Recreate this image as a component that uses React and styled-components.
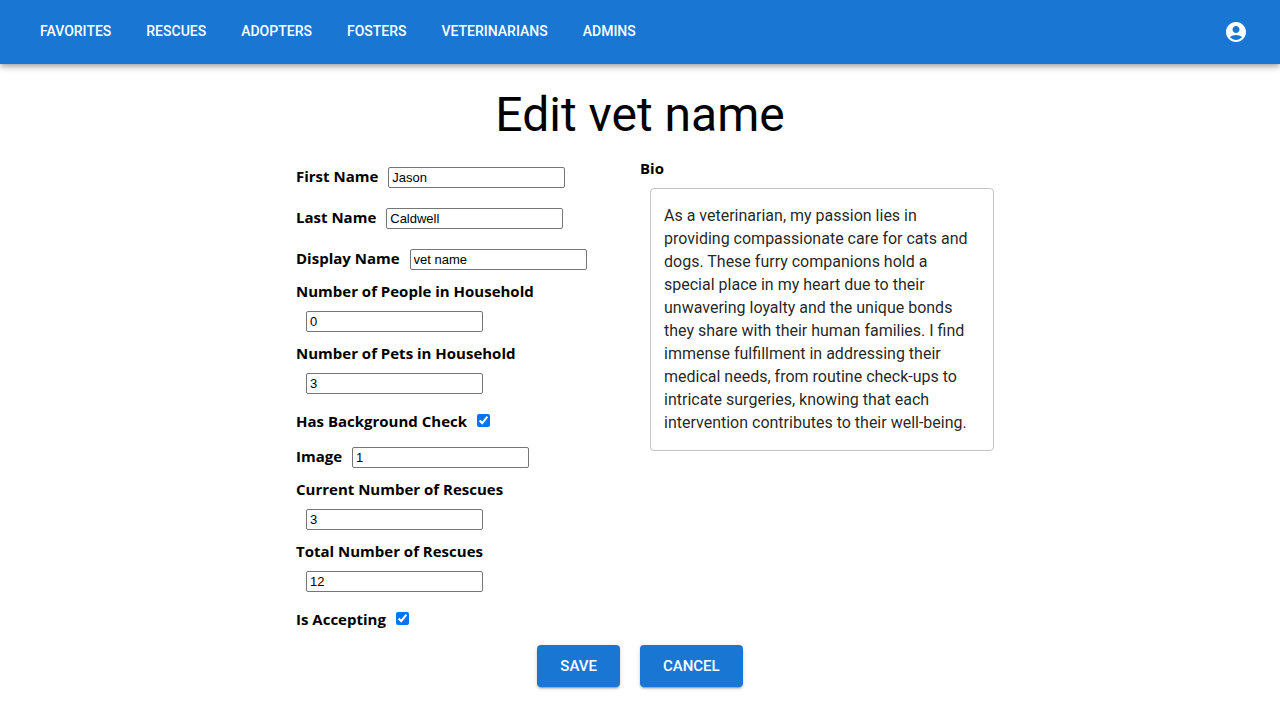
import React, { useState } from "react";
import styled, { createGlobalStyle } from "styled-components";

const GlobalStyle = createGlobalStyle`
  *, *::before, *::after { box-sizing: border-box; }
  body {
    margin: 0;
    background: #fff;
    color: #000;
    font-family: Roboto, "Liberation Sans", sans-serif;
  }
`;

const AppBar = styled.header`
  display: flex;
  align-items: center;
  justify-content: space-between;
  min-height: 64px;
  padding: 0 24px;
  background: #1976d2;
  color: #fff;
  box-shadow: 0 2px 4px -1px rgba(0, 0, 0, 0.2), 0 4px 5px 0 rgba(0, 0, 0, 0.14),
    0 1px 10px 0 rgba(0, 0, 0, 0.12);
`;

const Nav = styled.nav`
  display: flex;
  flex-wrap: wrap;
  column-gap: 3px;
`;

const NavLink = styled.a`
  padding: 6px 16px 8px;
  color: inherit;
  font-size: 14px;
  font-weight: 500;
  line-height: 24px;
  text-decoration: none;
  text-transform: uppercase;
`;

const AccountButton = styled.button`
  display: flex;
  padding: 8px 0;
  margin: 0 8px;
  border: 0;
  background: none;
  color: inherit;
  cursor: pointer;
`;

const AccountIcon = styled.svg`
  width: 24px;
  height: 24px;
  fill: currentColor;
`;

const Page = styled.main`
  padding: 23px 24px;
`;

const Title = styled.h1`
  margin: 0 0 14px;
  font-size: 48px;
  font-weight: 400;
  line-height: 56px;
  text-align: center;
`;

const Form = styled.form`
  max-width: 688px;
  margin: 0 auto;
`;

const Columns = styled.div`
  display: grid;
  grid-template-columns: 1fr 1fr;
`;

const Row = styled.div`
  display: flex;
  flex-direction: ${(p) => (p.$stacked ? "column" : "row")};
  align-items: ${(p) => (p.$stacked ? "flex-start" : "baseline")};
`;

const Label = styled.label`
  padding-top: 2px;
  font-family: "Open Sans", "Noto Sans", sans-serif;
  font-size: 15px;
  font-weight: 700;
  line-height: 19px;
`;

const TextInput = styled.input`
  width: 177px;
  height: 21px;
  margin: 10px;
  padding: 1px 3px;
  border: 1px solid #767676;
  border-radius: 2px;
  background: #fff;
  color: #000;
  font-family: "Liberation Sans", Arial, sans-serif;
  font-size: 13px;
`;

const CheckBox = styled.input`
  width: 13px;
  height: 13px;
  margin: 10px;
`;

const BioInput = styled.textarea`
  display: block;
  width: 100%;
  margin: 10px 0 0 10px;
  padding: 15px 13px 16px;
  border: 1px solid #c4c4c4;
  border-radius: 4px;
  background: #fff;
  color: rgba(0, 0, 0, 0.87);
  font-family: Roboto, "Liberation Sans", sans-serif;
  font-size: 16px;
  line-height: 23px;
  overflow: hidden;
  resize: none;
`;

const Actions = styled.div`
  display: flex;
  justify-content: center;
  gap: 20px;
  margin-top: 10px;
`;

const ActionButton = styled.button`
  padding: 8px 23px;
  border: 0;
  border-radius: 4px;
  background: #1976d2;
  color: #fff;
  font-family: Roboto, "Liberation Sans", sans-serif;
  font-size: 15px;
  font-weight: 500;
  line-height: 26px;
  text-transform: uppercase;
  cursor: pointer;
  box-shadow: 0 3px 1px -2px rgba(0, 0, 0, 0.2), 0 2px 2px 0 rgba(0, 0, 0, 0.14),
    0 1px 5px 0 rgba(0, 0, 0, 0.12);
`;

const links = ["Favorites", "Rescues", "Adopters", "Fosters", "Veterinarians", "Admins"];

const fields = [
  { id: "firstName", label: "First Name", value: "Jason" },
  { id: "lastName", label: "Last Name", value: "Caldwell" },
  { id: "displayName", label: "Display Name", value: "vet name" },
  { id: "people", label: "Number of People in Household", value: "0", stacked: true },
  { id: "pets", label: "Number of Pets in Household", value: "3", stacked: true },
  { id: "backgroundCheck", label: "Has Background Check", value: true },
  { id: "image", label: "Image", value: "1" },
  { id: "currentRescues", label: "Current Number of Rescues", value: "3", stacked: true },
  { id: "totalRescues", label: "Total Number of Rescues", value: "12", stacked: true },
  { id: "accepting", label: "Is Accepting", value: true },
];

const initialBio =
  "As a veterinarian, my passion lies in providing compassionate care for cats and dogs. These furry companions hold a special place in my heart due to their unwavering loyalty and the unique bonds they share with their human families. I find immense fulfillment in addressing their medical needs, from routine check-ups to intricate surgeries, knowing that each intervention contributes to their well-being.";

function Field({ id, label, value, stacked }) {
  return (
    <Row $stacked={stacked}>
      <Label htmlFor={id}>{label}</Label>
      {typeof value === "boolean" ? (
        <CheckBox id={id} type="checkbox" defaultChecked={value} />
      ) : (
        <TextInput id={id} type="text" defaultValue={value} />
      )}
    </Row>
  );
}

export default function App() {
  const [bio, setBio] = useState(initialBio);
  return (
    <>
      <GlobalStyle />
      <AppBar>
        <Nav>
          {links.map((name) => (
            <NavLink key={name} href={`#${name.toLowerCase()}`}>
              {name}
            </NavLink>
          ))}
        </Nav>
        <AccountButton type="button" aria-label="Account">
          <AccountIcon viewBox="0 0 24 24" aria-hidden="true">
            <path d="M12 2C6.480 2 2 6.480 2 12s4.480 10 10 10 10-4.480 10-10S17.520 2 12 2zm0 4c1.930 0 3.500 1.570 3.500 3.500S13.930 13 12 13s-3.500-1.570-3.500-3.500S10.070 6 12 6zm0 14c-2.030 0-4.430-.82-6.140-2.880C7.550 15.800 9.680 15 12 15s4.450.8 6.140 2.120C16.430 19.180 14.030 20 12 20z" />
          </AccountIcon>
        </AccountButton>
      </AppBar>
      <Page>
        <Title>Edit vet name</Title>
        <Form onSubmit={(e) => e.preventDefault()}>
          <Columns>
            <div>
              {fields.map((field) => (
                <Field key={field.id} {...field} />
              ))}
            </div>
            <Row $stacked>
              <Label htmlFor="bio">Bio</Label>
              <BioInput id="bio" rows={10} value={bio} onChange={(e) => setBio(e.target.value)} />
            </Row>
          </Columns>
          <Actions>
            <ActionButton type="submit">Save</ActionButton>
            <ActionButton type="button">Cancel</ActionButton>
          </Actions>
        </Form>
      </Page>
    </>
  );
}
